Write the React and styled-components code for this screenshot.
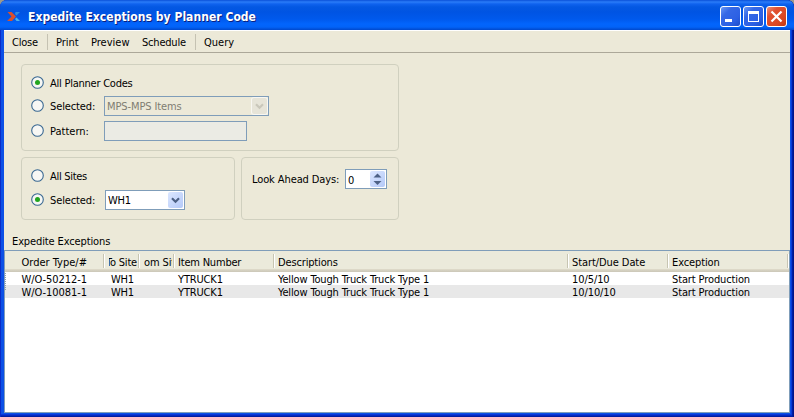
import React from "react";
import styled, { createGlobalStyle } from "styled-components";

const GlobalStyle = createGlobalStyle`
  * { box-sizing: border-box; }
  body { margin: 0; overflow: hidden; background: #9c9a8c; }
`;

const Window = styled.div`
  width: 794px;
  height: 417px;
  display: flex;
  flex-direction: column;
  border-radius: 7px 7px 0 0;
  overflow: hidden;
  background: #0c50e6;
  box-shadow: inset 1px 0 0 #0a2bc8, inset -1px 0 0 #00138c, inset -2px -1px 0 #001ea0,
    inset 0 -2px 0 #0528c0, inset -3px -3px 0 #0838d8;
  font: 11px/13px "DejaVu Sans Condensed", "DejaVu Sans", sans-serif;
  color: #000;
`;

const TitleBar = styled.header`
  height: 30px;
  flex: none;
  display: flex;
  align-items: center;
  padding: 3px 7px 0 7px;
  background: linear-gradient(
    #0a50d8 0, #2a7cf8 2px, #0f62ee 4px, #0458e2 7px, #0054e3 12px,
    #0059ec 19px, #0265fd 24px, #0263f8 27px, #0048cc 30px
  );
`;

const TitleText = styled.h1`
  flex: 1;
  margin: 0 0 0 7px;
  font-size: 12px;
  line-height: 16px;
  font-weight: bold;
  letter-spacing: 0.04px;
  color: #fff;
  text-shadow: 1px 1px 0 #0a1f80;
  white-space: nowrap;
`;

const CaptionButtons = styled.div`
  display: flex;
  gap: 2px;
`;

const CaptionButton = styled.button`
  width: 21px;
  height: 21px;
  padding: 0;
  border: 1px solid #fff;
  border-radius: 3px;
  background: ${(p) =>
    p.$danger
      ? "linear-gradient(135deg, #ec9078 0, #e05030 30%, #dc4822 70%, #c03812 100%)"
      : "linear-gradient(135deg, #6a98f4 0, #3568e6 30%, #2c60e4 70%, #1c4cc8 100%)"};
  svg { display: block; }
`;

const Client = styled.main`
  flex: 1;
  margin: 0 4px 4px;
  display: flex;
  flex-direction: column;
  background: #ece9d8;
  border-top: 1px solid #fff;
  min-height: 0;
`;

const Toolbar = styled.nav`
  height: 22px;
  flex: none;
  display: flex;
  align-items: center;
  padding: 2px 0 0 8px;
  border-bottom: 1px solid #aca899;
`;

const ToolButton = styled.button`
  width: ${(p) => p.$width}px;
  padding: 0;
  border: 0;
  background: none;
  font: inherit;
  color: inherit;
  text-align: left;
  letter-spacing: ${(p) => p.$spacing || 0}px;
  white-space: nowrap;
`;

const ToolSeparator = styled.span`
  width: 1px;
  height: 16px;
  margin: -1px 8px 0 0;
  background: #c5c2b2;
`;

const Panels = styled.section`
  width: 378px;
  margin: 11px 0 0 17px;
  display: grid;
  grid-template-columns: 214px 158px;
  gap: 6px;
`;

const Group = styled.div`
  height: ${(p) => p.$height}px;
  grid-column: ${(p) => (p.$wide ? "1 / -1" : "auto")};
  border: 1px solid #d0d0bf;
  border-radius: 4px;
  padding: ${(p) => p.$pad};
  display: flex;
  flex-direction: column;
`;

const Row = styled.div`
  height: 20px;
  margin-top: ${(p) => p.$gap || 0}px;
  display: flex;
  align-items: center;
`;

const FieldLabel = styled.label`
  width: ${(p) => p.$width || 54}px;
  flex: none;
  padding-top: 1px;
  letter-spacing: ${(p) => p.$spacing || 0}px;
  white-space: nowrap;
`;

const RadioIcon = styled.svg`
  width: 13px;
  height: 13px;
  flex: none;
  margin: 0 6px 1px 0;
`;

const Field = styled.div`
  width: ${(p) => p.$width}px;
  height: 20px;
  flex: none;
  display: flex;
  align-items: flex-start;
  justify-content: space-between;
  border: 1px solid #7f9db9;
  padding: 1px 1px 0 2px;
  background: ${(p) => p.$bg || "#fff"};
  color: ${(p) => (p.$disabled ? "#7f7d72" : "#000")};
  letter-spacing: ${(p) => p.$spacing || 0}px;
`;

const FieldValue = styled.span`
  padding-top: ${(p) => p.$drop || 2}px;
`;

const ArrowBox = styled.span`
  width: 15px;
  height: 16px;
  display: block;
  border-radius: 2px;
  background: ${(p) =>
    p.$disabled ? "#e6e4d8" : "linear-gradient(135deg, #dce7ff, #b4c9f8)"};
  box-shadow: ${(p) => (p.$disabled ? "0 0 0 1px #f8f7f2" : "none")};
  svg { display: block; }
`;

const TableTitle = styled.h2`
  margin: 15px 0 0 8px;
  height: 15px;
  font: inherit;
  letter-spacing: -0.12px;
`;

const Table = styled.section`
  flex: 1;
  min-height: 0;
  border: 1px solid #7f9db9;
  background: #fff;
`;

const columns = "100px 35px 35px 100px 294px 100px 120px";

const HeaderRow = styled.div`
  height: 21px;
  display: grid;
  grid-template-columns: ${columns};
  align-items: start;
  padding-top: 3px;
  background: linear-gradient(#ebeadb 0 18px, #e2decd 18px, #d6d2c2 19px, #cbc7b8 21px);
`;

const HeaderCell = styled.div`
  height: 14px;
  padding: 1px 0 0 ${(p) => p.$pad}px;
  border-right: 1px solid #fff;
  box-shadow: inset -1px 0 0 #c7c5b2;
  overflow: hidden;
  white-space: nowrap;
  letter-spacing: ${(p) => p.$spacing || 0}px;
  line-height: 15px;
`;

const ClippedText = styled.span`
  display: block;
  width: ${(p) => p.$width}px;
  overflow: hidden;
  text-indent: ${(p) => p.$shift || 0}px;
`;

const TableBody = styled.div`
  position: relative;
  &::before {
    content: "";
    position: absolute;
    left: 0;
    top: 1px;
    width: 1px;
    height: 18px;
    background: repeating-linear-gradient(#8fa0b0 0 1px, transparent 1px 2px);
  }
`;

const DataRow = styled.div`
  height: 13px;
  line-height: 15px;
  display: grid;
  grid-template-columns: ${columns};
  background: ${(p) => (p.$alt ? "#e8e8e8" : "#fff")};
`;

const Cell = styled.div`
  padding-left: ${(p) => p.$pad}px;
  letter-spacing: ${(p) => p.$spacing || 0}px;
  white-space: nowrap;
`;

function Radio({ checked }) {
  return (
    <RadioIcon viewBox="0 0 13 13">
      <circle cx="6.5" cy="6.5" r="5.8" fill="#f7f7f4" stroke="#396892" strokeWidth="1.1" />
      {checked && <circle cx="6.5" cy="6.5" r="2.5" fill="#22a51f" />}
    </RadioIcon>
  );
}

function DropArrow({ disabled }) {
  return (
    <ArrowBox $disabled={disabled}>
      <svg width="15" height="16" viewBox="0 0 15 16">
        <path d="M4 6.2 7.5 9.7 11 6.2" fill="none" stroke={disabled ? "#c9c7ba" : "#4d6185"} strokeWidth="2.2" />
      </svg>
    </ArrowBox>
  );
}

const rows = [
  ["W/O-50212-1", "WH1", "", "YTRUCK1", "Yellow Tough Truck Truck Type 1", "10/5/10", "Start Production"],
  ["W/O-10081-1", "WH1", "", "YTRUCK1", "Yellow Tough Truck Truck Type 1", "10/10/10", "Start Production"],
];
const cellPads = [16.5, 6, 0, 3, 3, 3, 3];
const cellSpacing = [-0.05, -0.3, 0, -0.15, -0.15, -0.08, -0.12];

export default function App() {
  return (
    <>
      <GlobalStyle />
      <Window>
        <TitleBar>
          <svg width="14" height="12" viewBox="0 0 14 12">
            <path d="M.5 1h4L9 5.500 5 10H0l4.500-4.500z" fill="#d8502c" />
            <path d="M8.500 1H13L9.500 4.500 8 3z" fill="#2c8be0" />
            <path d="M8 8l1.500-1.500L13 10H9.500z" fill="#4ab4e8" />
          </svg>
          <TitleText>Expedite Exceptions by Planner Code</TitleText>
          <CaptionButtons>
            <CaptionButton aria-label="Minimize">
              <svg width="19" height="19"><path d="M4 12h7v3H4z" fill="#fff" /></svg>
            </CaptionButton>
            <CaptionButton aria-label="Maximize">
              <svg width="19" height="19">
                <path d="M4 4h11v11H4zM5 7v7h9V7z" fill="#fff" fillRule="evenodd" />
              </svg>
            </CaptionButton>
            <CaptionButton aria-label="Close window" $danger>
              <svg width="19" height="19"><path d="M4.500 4.500l10 10M14.500 4.500l-10 10" stroke="#fff" strokeWidth="2.200" /></svg>
            </CaptionButton>
          </CaptionButtons>
        </TitleBar>
        <Client>
          <Toolbar>
            <ToolButton $width={35} $spacing={-0.2}>Close</ToolButton>
            <ToolSeparator />
            <ToolButton $width={35}>Print</ToolButton>
            <ToolButton $width={51}>Preview</ToolButton>
            <ToolButton $width={53} $spacing={-0.2}>Schedule</ToolButton>
            <ToolSeparator />
            <ToolButton $width={40}>Query</ToolButton>
          </Toolbar>
          <Panels>
            <Group $wide $height={87} $pad="8px 9px">
              <Row>
                <Radio checked />
                <FieldLabel $spacing={-0.24}>All Planner Codes</FieldLabel>
              </Row>
              <Row $gap={3}>
                <Radio />
                <FieldLabel $spacing={-0.12}>Selected:</FieldLabel>
                <Field $width={165} $bg="#ece9d8" $disabled $spacing={-0.1}>
                  <FieldValue>MPS-MPS Items</FieldValue>
                  <DropArrow disabled />
                </Field>
              </Row>
              <Row $gap={5}>
                <Radio />
                <FieldLabel>Pattern:</FieldLabel>
                <Field $width={143} $bg="#ebebe4" />
              </Row>
            </Group>
            <Group $height={63} $pad="8px 9px">
              <Row>
                <Radio />
                <FieldLabel $spacing={-0.3}>All Sites</FieldLabel>
              </Row>
              <Row $gap={4}>
                <Radio checked />
                <FieldLabel $width={55} $spacing={-0.12}>Selected:</FieldLabel>
                <Field $width={80} $spacing={-0.3}>
                  <FieldValue>WH1</FieldValue>
                  <DropArrow />
                </Field>
              </Row>
            </Group>
            <Group $height={63} $pad="11px 10px">
              <Row>
                <FieldLabel $width={93} $spacing={-0.1}>Look Ahead Days:</FieldLabel>
                <Field $width={42}>
                  <FieldValue $drop={3}>0</FieldValue>
                  <ArrowBox>
                    <svg width="15" height="16" viewBox="0 0 15 16">
                      <path d="M3.500 6.500h8L7.500 2.500zM3.500 10h8l-4 4z" fill="#4d6185" />
                    </svg>
                  </ArrowBox>
                </Field>
              </Row>
            </Group>
          </Panels>
          <TableTitle>Expedite Exceptions</TableTitle>
          <Table>
            <HeaderRow>
              <HeaderCell $pad={16.5}>Order Type/#</HeaderCell>
              <HeaderCell $pad={4} $spacing={-0.2}><ClippedText $width={28} $shift={-3}>To Site</ClippedText></HeaderCell>
              <HeaderCell $pad={4} $spacing={-0.1}><ClippedText $width={28}>om Site</ClippedText></HeaderCell>
              <HeaderCell $pad={3} $spacing={-0.2}>Item Number</HeaderCell>
              <HeaderCell $pad={3} $spacing={-0.15}>Descriptions</HeaderCell>
              <HeaderCell $pad={3} $spacing={-0.08}>Start/Due Date</HeaderCell>
              <HeaderCell $pad={3} $spacing={-0.12}>Exception</HeaderCell>
            </HeaderRow>
            <TableBody>
              {rows.map((row, r) => (
                <DataRow key={r} $alt={r % 2 === 1}>
                  {row.map((value, c) => (
                    <Cell key={c} $pad={cellPads[c]} $spacing={cellSpacing[c]}>{value}</Cell>
                  ))}
                </DataRow>
              ))}
            </TableBody>
          </Table>
        </Client>
      </Window>
    </>
  );
}
